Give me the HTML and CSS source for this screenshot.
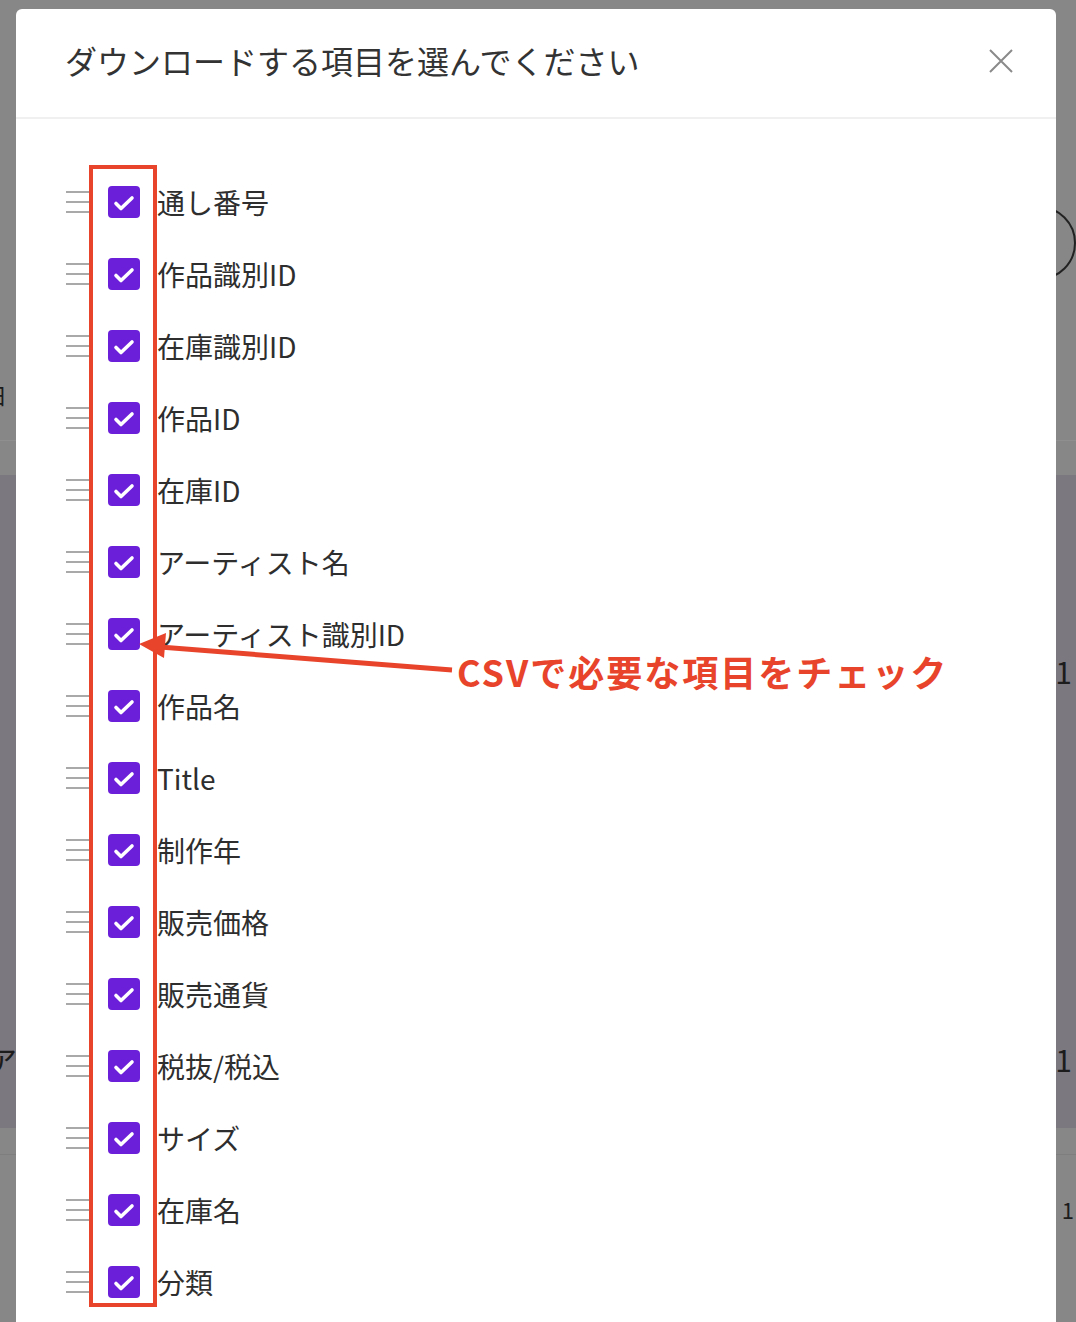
FILE: index.html
```html
<!DOCTYPE html>
<html lang="ja">
<head>
    <meta charset="UTF-8">
    <meta name="viewport" content="width=device-width, initial-scale=1.0">
    <title>ダウンロード項目</title>
    <link rel="stylesheet" href="styles.css">
</head>
<body>
    <!-- 背景のページ（オーバーレイで暗くなっている） -->
    <div class="page">
        <div class="band band-top">
            <div class="frag-row frag-end">
                <div class="pill"></div>
            </div>
            <div class="frag-row frag-day">
                <span class="frag-left small">日</span>
            </div>
        </div>
        <div class="rule light"></div>
        <div class="band band-gap"></div>
        <div class="band band-purple">
            <div class="frag-row frag-one">
                <span></span>
                <span class="frag-right">1</span>
            </div>
            <div class="frag-row frag-a">
                <span class="frag-left">ア</span>
                <span class="frag-right">1</span>
            </div>
        </div>
        <div class="band band-gap2"></div>
        <div class="rule dark"></div>
        <div class="band band-bottom">
            <div class="frag-row frag-last">
                <span></span>
                <span class="frag-right small">1</span>
            </div>
        </div>
    </div>

    <!-- モーダル -->
    <div class="modal">
        <div class="modal-head">
            <h2 class="modal-title">ダウンロードする項目を選んでください</h2>
            <a href="javascript:;" class="modal-close">
                <svg width="24" height="24" viewBox="0 0 24 24">
                    <path d="M1 1 L23 23 M23 1 L1 23" stroke="#8a8a8a" stroke-width="2" fill="none"/>
                </svg>
            </a>
        </div>
        <ul class="field-list">
            <li><i class="handle"></i><span class="cb"></span><span class="label">通し番号</span></li>
            <li><i class="handle"></i><span class="cb"></span><span class="label">作品識別ID</span></li>
            <li><i class="handle"></i><span class="cb"></span><span class="label">在庫識別ID</span></li>
            <li><i class="handle"></i><span class="cb"></span><span class="label">作品ID</span></li>
            <li><i class="handle"></i><span class="cb"></span><span class="label">在庫ID</span></li>
            <li><i class="handle"></i><span class="cb"></span><span class="label">アーティスト名</span></li>
            <li><i class="handle"></i><span class="cb"></span><span class="label">アーティスト識別ID</span></li>
            <li><i class="handle"></i><span class="cb"></span><span class="label">作品名</span></li>
            <li><i class="handle"></i><span class="cb"></span><span class="label">Title</span></li>
            <li><i class="handle"></i><span class="cb"></span><span class="label">制作年</span></li>
            <li><i class="handle"></i><span class="cb"></span><span class="label">販売価格</span></li>
            <li><i class="handle"></i><span class="cb"></span><span class="label">販売通貨</span></li>
            <li><i class="handle"></i><span class="cb"></span><span class="label">税抜/税込</span></li>
            <li><i class="handle"></i><span class="cb"></span><span class="label">サイズ</span></li>
            <li><i class="handle"></i><span class="cb"></span><span class="label">在庫名</span></li>
            <li><i class="handle"></i><span class="cb"></span><span class="label">分類</span></li>
        </ul>
    </div>

    <!-- 注釈 -->
    <div class="mark-box"></div>
    <svg class="mark-arrow" width="1076" height="1322" viewBox="0 0 1076 1322">
        <line x1="452" y1="670" x2="160" y2="647" stroke="#e8432b" stroke-width="5"/>
        <polygon points="139,644 164,658 166,633" fill="#e8432b"/>
    </svg>
    <span class="mark-text">CSVで必要な項目をチェック</span>

    <script>
        // チェックマークを全部に入れる
        const boxes = document.querySelectorAll('.cb');
        for (let i = 0; i < boxes.length; i++) {
            boxes[i].innerHTML = '<svg width="32" height="32" viewBox="0 0 32 32"><path d="M8 17.5 L13 22.5 L24 12" stroke="#fff" stroke-width="3.6" fill="none" stroke-linecap="round" stroke-linejoin="round"/></svg>';
        }
    </script>
</body>
</html>
```

FILE: styles.css
```css
* {
    padding: 0px;
    margin: 0px;
}

html,
body {
    width: 1076px;
    height: 1322px;
    overflow: hidden;
}

body {
    background: #878787;
    font-family: "Noto Sans CJK JP", "Noto Sans", sans-serif;
    color: #333;
    position: relative;
}

a {
    text-decoration: none;
}

ul,
li {
    list-style: none;
}

/* 背景ページ */
.page {
    width: 1076px;
}

.band {
    overflow: hidden;
}

.band-top {
    height: 440px;
}

.band-gap {
    height: 34px;
}

.band-purple {
    height: 653px;
    background: #7b7880;
}

.band-gap2 {
    height: 26px;
}

.band-bottom {
    height: 169px;
}

.rule {
    height: 1px;
}

.rule.light {
    background: #8f8f8f;
}

.rule.dark {
    background: #7e7e7e;
}

.frag-row {
    display: flex;
    justify-content: space-between;
    align-items: center;
    color: #1c1c1c;
    font-size: 30px;
    line-height: 36px;
}

.frag-end {
    justify-content: flex-end;
    margin-top: 206px;
}

.pill {
    width: 120px;
    height: 70px;
    border: 2px solid #222;
    border-radius: 37px;
}

.frag-day {
    margin-top: 96px;
}

.frag-left {
    margin-left: -13px;
}

.frag-left.small {
    font-size: 22px;
    margin-left: -15px;
}

.frag-right {
    margin-right: 4px;
}

.frag-right.small {
    font-size: 22px;
    margin-right: 2px;
}

.frag-one {
    margin-top: 178px;
}

.frag-a {
    margin-top: 352px;
}

.frag-last {
    margin-top: 36px;
}

/* モーダル */
.modal {
    position: absolute;
    left: 16px;
    top: 9px;
    width: 1040px;
    height: 1340px;
    background: #fff;
    border-radius: 6px 6px 0 0;
    overflow: hidden;
}

.modal-head {
    height: 108px;
    border-bottom: 2px solid #f0f0f0;
    display: flex;
    align-items: center;
    justify-content: space-between;
    padding: 0 43px 0 49px;
}

.modal-title {
    font-size: 32px;
    font-weight: 400;
    color: #333;
    line-height: 40px;
    margin-top: -6px;
}

.modal-close {
    display: block;
    width: 24px;
    height: 24px;
    margin-top: -4px;
}

.modal-close svg {
    display: block;
}

.field-list {
    padding: 47px 0 0 50px;
}

.field-list li {
    height: 72px;
    display: flex;
    align-items: center;
}

.handle {
    display: block;
    width: 24px;
    height: 22px;
    background: linear-gradient(#a9a9a9, #a9a9a9) 0 0 / 24px 2px no-repeat,
        linear-gradient(#a9a9a9, #a9a9a9) 0 10px / 24px 2px no-repeat,
        linear-gradient(#a9a9a9, #a9a9a9) 0 20px / 24px 2px no-repeat;
}

.cb {
    display: block;
    width: 32px;
    height: 32px;
    margin-left: 18px;
    background: #6b1fd9;
    border-radius: 4px;
}

.cb svg {
    display: block;
}

.label {
    margin-left: 17px;
    font-size: 28px;
    color: #2e2e2e;
    line-height: 36px;
}

/* 注釈 */
.mark-box {
    position: absolute;
    left: 89px;
    top: 165px;
    width: 60px;
    height: 1134px;
    border: 4px solid #e8432b;
}

.mark-arrow {
    position: absolute;
    left: 0px;
    top: 0px;
}

.mark-text {
    position: absolute;
    left: 457px;
    top: 652px;
    font-size: 36px;
    line-height: 38px;
    font-weight: 700;
    letter-spacing: 2px;
    color: #e8432b;
    white-space: nowrap;
}
```
